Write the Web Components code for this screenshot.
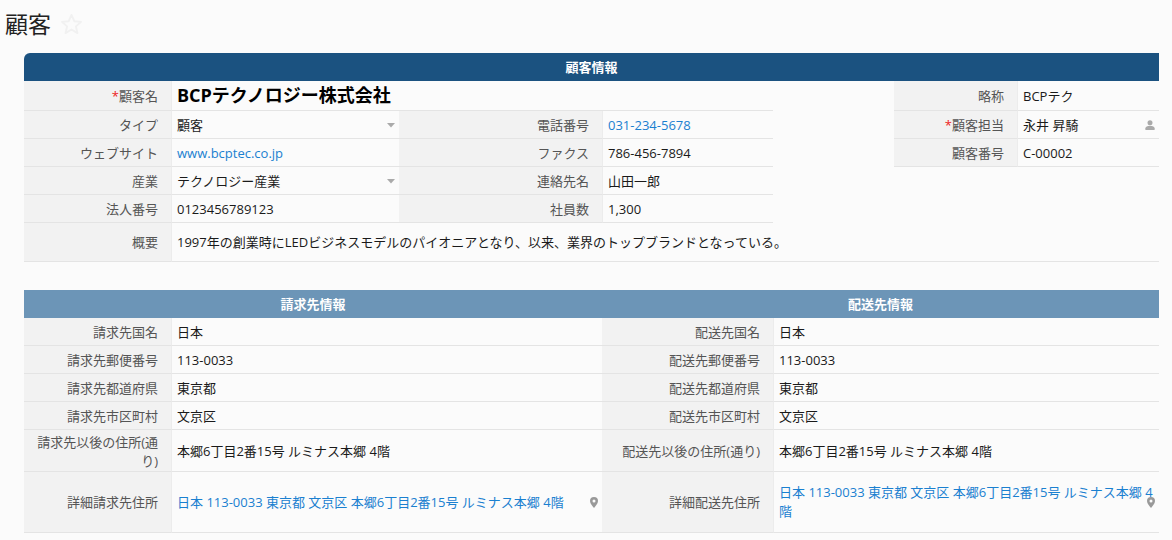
<!DOCTYPE html>
<html lang="ja"><head><meta charset="utf-8"><title>顧客</title>
<style>
html,body{margin:0;padding:0;background:#fbfbfb;overflow:hidden}
body{font:13px/19px "Open Sans","Noto Sans CJK JP",sans-serif;color:#1a1a1a}
</style></head><body>
<x-page>
<x-title>顧客</x-title>
<x-section heading="顧客情報" tone="dark">
  <x-columns style="--gap:121px">
    <x-stack style="--w:749px">
      <x-row h="30">
        <x-field label="顧客名" required lw="147" w="749"><x-strong>BCPテクノロジー株式会社</x-strong></x-field>
      </x-row>
      <x-row>
        <x-field label="タイプ" lw="147" w="375" icon="caret">顧客</x-field>
        <x-field label="電話番号" lw="203" w="374"><x-link>031-234-5678</x-link></x-field>
      </x-row>
      <x-row>
        <x-field label="ウェブサイト" lw="147" w="375"><x-link>www.bcptec.co.jp</x-link></x-field>
        <x-field label="ファクス" lw="203" w="374">786-456-7894</x-field>
      </x-row>
      <x-row>
        <x-field label="産業" lw="147" w="375" icon="caret">テクノロジー産業</x-field>
        <x-field label="連絡先名" lw="203" w="374">山田一郎</x-field>
      </x-row>
      <x-row>
        <x-field label="法人番号" lw="147" w="375">0123456789123</x-field>
        <x-field label="社員数" lw="203" w="374">1,300</x-field>
      </x-row>
    </x-stack>
    <x-stack style="--w:265px">
      <x-row h="30"><x-field label="略称" lw="123" w="265">BCPテク</x-field></x-row>
      <x-row><x-field label="顧客担当" required lw="123" w="265" icon="person">永井 昇騎</x-field></x-row>
      <x-row><x-field label="顧客番号" lw="123" w="265">C-00002</x-field></x-row>
    </x-stack>
  </x-columns>
  <x-row h="39" style="--pt:0px">
    <x-field label="概要" lw="147" w="1135" style="font-family:'Open Sans','Noto Sans CJK TC',sans-serif">1997年の創業時にLEDビジネスモデルのパイオニアとなり、以来、業界のトップブランドとなっている。</x-field>
  </x-row>
</x-section>
<x-section heading="請求先情報" heading2="配送先情報" tone="light" style="--mt:28px">
  <x-stack style="--w:1135px">
    <x-row>
      <x-field label="請求先国名" lw="147" w="578">日本</x-field>
      <x-field label="配送先国名" lw="171" w="557">日本</x-field>
    </x-row>
    <x-row>
      <x-field label="請求先郵便番号" lw="147" w="578">113-0033</x-field>
      <x-field label="配送先郵便番号" lw="171" w="557">113-0033</x-field>
    </x-row>
    <x-row>
      <x-field label="請求先都道府県" lw="147" w="578">東京都</x-field>
      <x-field label="配送先都道府県" lw="171" w="557">東京都</x-field>
    </x-row>
    <x-row>
      <x-field label="請求先市区町村" lw="147" w="578">文京区</x-field>
      <x-field label="配送先市区町村" lw="171" w="557">文京区</x-field>
    </x-row>
    <x-row h="42">
      <x-field label="請求先以後の住所(通り)" lw="147" w="578">本郷6丁目2番15号 ルミナス本郷 4階</x-field>
      <x-field label="配送先以後の住所(通り)" lw="171" w="557">本郷6丁目2番15号 ルミナス本郷 4階</x-field>
    </x-row>
    <x-row h="61" style="--pt:0px">
      <x-field label="詳細請求先住所" lw="147" w="578" icon="pin"><x-link>日本 113-0033 東京都 文京区 本郷6丁目2番15号 ルミナス本郷 4階</x-link></x-field>
      <x-field label="詳細配送先住所" lw="171" w="557" icon="pin"><x-link>日本 113-0033 東京都 文京区 本郷6丁目2番15号 ルミナス本郷 4階</x-link></x-field>
    </x-row>
  </x-stack>
</x-section>
</x-page>
<script>
const ICONS={
 caret:'<svg width="8" height="5" viewBox="0 0 8 5"><path d="M0 0h8L4 4.5z" fill="#aaa"/></svg>',
 person:'<svg width="10" height="10" viewBox="0 0 10 10"><circle cx="5" cy="2.7" r="2.5" fill="#aaa"/><path d="M0.4 10V8.2C0.4 6.6 2.4 5.7 5 5.7s4.6.9 4.6 2.5V10z" fill="#aaa"/></svg>',
 pin:'<svg width="8" height="11" viewBox="0 0 8 11"><path fill-rule="evenodd" d="M4 0a4 4 0 0 1 4 4c0 2.4-2.6 5.4-4 7C2.6 9.4 0 6.4 0 4a4 4 0 0 1 4-4zm0 2.5a1.5 1.5 0 1 0 0 3 1.5 1.5 0 0 0 0-3z" fill="#999"/></svg>'
};
function def(name,css,html,init){
 customElements.define(name,class extends HTMLElement{
  connectedCallback(){
   if(this.shadowRoot)return;
   const r=this.attachShadow({mode:'open'});
   r.innerHTML='<style>'+css+'</style>'+(typeof html==='function'?html(this):html);
   if(init)init(this,r);
  }
 });
}
def('x-page',':host{display:block;width:1172px;height:540px;overflow:hidden}','<slot></slot>');
def('x-title',':host{display:flex;align-items:center;gap:9px;height:53px;padding:0 0 6px 5px;box-sizing:border-box;font-size:23px;line-height:30px;color:#222}svg{display:block}',
 '<span><slot></slot></span><svg width="23" height="22" viewBox="0 0 24 23"><path d="M12 2l2.9 6.6 7.1.7-5.4 4.7 1.6 7-6.2-3.7-6.2 3.7 1.6-7L2 9.3l7.1-.7z" fill="#fbfbfb" stroke="#f1f1f1" stroke-width="2" stroke-linejoin="round"/></svg>');
def('x-section',':host{display:block;margin:var(--mt,0) 13px 0 24px;width:1135px}.h{display:flex;height:28px;color:#fff;font-weight:700;font-size:13px;line-height:29px;text-align:center}.h span{display:block}.dark{background:#1b5280;border-radius:6px 0 0 0}.dark span{flex:1}.light{background:#6c95b7}.light span:first-child{width:578px}.light span:last-child{flex:1}',
 el=>{const a=el.getAttribute('heading'),b=el.getAttribute('heading2');return '<div class="h '+el.getAttribute('tone')+'"><span>'+a+'</span>'+(b?'<span>'+b+'</span>':'')+'</div><slot></slot>';});
def('x-columns',':host{display:flex;gap:var(--gap)}','<slot></slot>');
def('x-stack',':host{display:flex;flex-direction:column;width:var(--w)}','<slot></slot>');
def('x-row',':host{display:flex;height:28px}','<slot></slot>',el=>{const h=el.getAttribute('h');if(h)el.style.height=h+'px';});
def('x-field',`:host{display:flex;box-sizing:border-box;height:100%;position:relative}
 .l{box-sizing:border-box;flex:none;background:#f2f2f2;color:#555;text-align:right;padding:var(--pt,2px) 13px 0 3px;display:flex;align-items:center;justify-content:flex-end;border-bottom:1px solid #e4e4e4;font-family:"Open Sans","Noto Sans CJK JP",sans-serif}
 .l>span{display:block}
 .r{color:#e22}
 .v{box-sizing:border-box;flex:1;min-width:0;background:#fbfbfb;border-left:1px solid #ececec;border-bottom:1px solid #e4e4e4;padding:var(--pt,2px) 4px 0 5px;display:flex;align-items:center;color:#1a1a1a}
 .i{position:absolute;display:block;line-height:0}`,
 el=>{const g=n=>el.getAttribute(n);const ic=g('icon');
  return '<div class="l" style="width:'+g('lw')+'px"><span>'+(el.hasAttribute('required')?'<span class="r">*</span>':'')+g('label')+'</span></div><div class="v"><span><slot></slot></span></div>'+(ic?'<span class="i '+ic+'" style="'+({caret:'right:4px;top:12px',person:'right:4px;top:9px',pin:'right:4px;top:25px'})[ic]+'">'+ICONS[ic]+'</span>':'');},
 el=>{el.style.width=el.getAttribute('w')+'px';});
def('x-link',':host{color:#1a80d0}','<slot></slot>');
def('x-strong',':host{font-weight:700;font-size:18px;color:#000}','<slot></slot>');
</script>
</body></html>
